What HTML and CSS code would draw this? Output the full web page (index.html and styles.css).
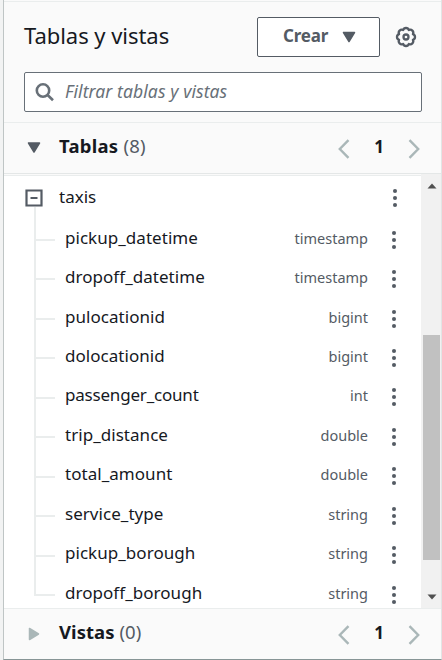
FILE: index.html
```html
<!DOCTYPE html>
<html lang="es">
<head>
<meta charset="utf-8">
<title>Tablas y vistas</title>
<link rel="stylesheet" href="styles.css">
</head>
<body>
<svg width="0" height="0" class="defs">
  <symbol id="dots" viewBox="0 0 6 20"><circle cx="3" cy="3" r="2.05"/><circle cx="3" cy="10" r="2.05"/><circle cx="3" cy="17" r="2.05"/></symbol>
  <symbol id="prev" viewBox="0 0 12 20"><path d="M10.500 1.200 1.800 10l8.700 8.800"/></symbol>
  <symbol id="next" viewBox="0 0 12 20"><path d="M1.500 1.200 10.200 10l-8.700 8.800"/></symbol>
</svg>
<main class="panel">
  <header class="head">
    <div class="title-row">
      <h1>Tablas y vistas</h1>
      <button class="create"><span>Crear</span><svg width="14" height="12" viewBox="0 0 14 12"><path d="M1.500 1.500h11L7 10.500z"/></svg></button>
      <svg class="gear" width="22" height="22" viewBox="0 0 22 22"><path d="M17.930 8.130a3.020 3.020 0 0 1 0 5.740a3.020 3.020 0 0 1-4.060 4.060a3.020 3.020 0 0 1-5.740 0a3.020 3.020 0 0 1-4.060-4.060a3.020 3.020 0 0 1 0-5.740a3.020 3.020 0 0 1 4.060-4.060a3.020 3.020 0 0 1 5.740 0a3.020 3.020 0 0 1 4.060 4.060z"/><circle cx="11" cy="11" r="2.500"/></svg>
    </div>
    <label class="search">
      <svg width="20" height="20" viewBox="0 0 20 20"><circle cx="8" cy="8.500" r="6.200"/><path d="m12.300 12.800 5.700 5.500"/></svg>
      <input type="text" placeholder="Filtrar tablas y vistas">
    </label>
  </header>
  <section class="bar">
    <svg class="caret" width="14" height="12" viewBox="0 0 14 12"><path d="M1.500 1h11L7 10z"/></svg>
    <h2>Tablas <span>(8)</span></h2>
    <nav class="pager"><svg><use href="#prev"/></svg><b>1</b><svg><use href="#next"/></svg></nav>
  </section>
  <div class="body">
    <div class="tree">
      <div class="table-row">
        <svg class="toggle" width="18" height="18" viewBox="0 0 18 18"><path d="M1.500 1.500h15v15h-15zM5.500 9h7"/></svg>
        <span class="table-name">taxis</span>
        <svg class="dots"><use href="#dots"/></svg>
      </div>
      <ul>
        <li><span class="name">pickup_datetime</span><span class="type">timestamp</span><svg class="dots"><use href="#dots"/></svg></li>
        <li><span class="name">dropoff_datetime</span><span class="type">timestamp</span><svg class="dots"><use href="#dots"/></svg></li>
        <li><span class="name">pulocationid</span><span class="type">bigint</span><svg class="dots"><use href="#dots"/></svg></li>
        <li><span class="name">dolocationid</span><span class="type">bigint</span><svg class="dots"><use href="#dots"/></svg></li>
        <li><span class="name tight">passenger_count</span><span class="type">int</span><svg class="dots"><use href="#dots"/></svg></li>
        <li><span class="name">trip_distance</span><span class="type">double</span><svg class="dots"><use href="#dots"/></svg></li>
        <li><span class="name">total_amount</span><span class="type">double</span><svg class="dots"><use href="#dots"/></svg></li>
        <li><span class="name">service_type</span><span class="type">string</span><svg class="dots"><use href="#dots"/></svg></li>
        <li><span class="name">pickup_borough</span><span class="type">string</span><svg class="dots"><use href="#dots"/></svg></li>
        <li><span class="name">dropoff_borough</span><span class="type">string</span><svg class="dots"><use href="#dots"/></svg></li>
      </ul>
    </div>
    <div class="scrollbar">
      <svg width="10" height="6" viewBox="0 0 10 6"><path d="M.5 5.500h9L5 .5z"/></svg>
      <div class="thumb"></div>
      <svg width="10" height="6" viewBox="0 0 10 6"><path d="M.5.5h9L5 5.500z"/></svg>
    </div>
  </div>
  <section class="bar views">
    <svg class="caret" width="14" height="14" viewBox="0 0 14 14"><path d="M2.500 1.500v11l9-5.500z"/></svg>
    <h2>Vistas <span>(0)</span></h2>
    <nav class="pager"><svg><use href="#prev"/></svg><b>1</b><svg><use href="#next"/></svg></nav>
  </section>
</main>
</body>
</html>
```
FILE: styles.css
```css
* { box-sizing: border-box; }
body {
  margin: 0;
  height: 660px;
  overflow: hidden;
  padding-left: 3px;
  background: #f2f3f3;
  font-family: "Noto Sans", "Open Sans", sans-serif;
  color: #16191f;
}
.defs { display: block; height: 0; }
.panel {
  height: 660px;
  display: flex;
  flex-direction: column;
  background: #fafafa;
  border-left: 1px solid #bfc5c5;
  border-right: 1px solid #e2e5e5;
  border-bottom: 1px solid #879596;
}
.head {
  height: 121px;
  margin-top: 1px;
  padding: 15px 19px 0 20px;
  border-top: 1px solid #eaeded;
}
.title-row { display: flex; align-items: center; height: 40px; }
h1 { margin: -5px 0 0; flex: 1; font-size: 22px; font-weight: 400; line-height: 30px; letter-spacing: -.04px; }
.create {
  width: 123px;
  height: 40px;
  padding: 0 23px 0 25px;
  display: flex;
  align-items: center;
  justify-content: space-between;
  border: 1.500px solid #545b64;
  border-radius: 2px;
  background: #fff;
  color: #545b64;
  font: 700 17px "Noto Sans", sans-serif;
  letter-spacing: -.2px;
}
.create span { margin-top: -3px; }
.create svg, .caret { fill: #545b64; stroke: #545b64; stroke-width: 1.500; stroke-linejoin: round; }
.gear { margin: 0 5px 0 15px; fill: none; stroke: #545b64; stroke-width: 2.300; stroke-linejoin: round; }
.search {
  display: flex;
  align-items: center;
  height: 40px;
  margin-top: 15px;
  padding-left: 10px;
  border: 1px solid #687078;
  border-radius: 2px;
  background: #fff;
}
.search svg { fill: none; stroke: #687078; stroke-width: 2.600; flex: none; }
.search input {
  flex: 1;
  min-width: 0;
  margin: -3px 0 0 10px;
  padding: 0;
  border: 0;
  outline: 0;
  background: none;
  font: italic 17.500px "Noto Sans", sans-serif;
  letter-spacing: .1px;
}
.search input::placeholder { color: #687078; opacity: 1; }
.bar {
  display: flex;
  align-items: center;
  height: 51px;
  padding: 0 21px 2px 23px;
  border-top: 1px solid #eaeded;
  flex: none;
}
h2 { flex: 1; margin: -2px 0 0 18px; font-size: 18.500px; font-weight: 700; line-height: 26px; letter-spacing: .25px; }
h2 span { font-weight: 400; color: #545b64; }
.views h2 { letter-spacing: .05px; }
.caret { margin-top: 2px; }
.views .caret { fill: #aab7b8; stroke: #aab7b8; }
.pager { display: flex; align-items: center; gap: 23.500px; }
.pager svg { width: 12px; height: 20px; margin-top: 3px; fill: none; stroke: #aab7b8; stroke-width: 2.400; }
.pager b { width: 11px; font-size: 17px; line-height: 24px; text-align: center; }
.body { flex: 1; min-height: 0; display: flex; border-top: 1px solid #e4e7e7; }
.tree { flex: 1; margin-top: 1px; border-top: 1px solid #eaeded; background: #fff; overflow: hidden; }
.table-row { display: flex; align-items: center; height: 44px; padding: 0 23px 0 21px; }
.toggle { fill: none; stroke: #545b64; stroke-width: 2.200; }
.table-name { flex: 1; margin: -3px 0 0 16px; font-size: 17px; }
.dots { width: 6px; height: 20px; flex: none; fill: #545b64; }
ul { margin: 0; padding: 0 24px 0 30px; list-style: none; }
li {
  position: relative;
  display: flex;
  align-items: center;
  height: 39.450px;
  padding-left: 31px;
}
li::before { content: ""; position: absolute; left: 0; top: 0; width: 2px; height: 100%; background: #eaeded; }
li:first-child::before { top: -13px; height: calc(100% + 13px); }
li:last-child::before { height: 20px; }
li::after { content: ""; position: absolute; left: 0; top: 19px; width: 21px; height: 2px; background: #eaeded; }
.name { flex: 1; margin-top: -5px; font-size: 17px; letter-spacing: .04px; }
.tight { letter-spacing: -.2px; }
.type { margin: -4px 23px 0 0; font-size: 14.500px; color: #545b64; }
.scrollbar {
  width: 20px;
  display: flex;
  flex-direction: column;
  align-items: center;
  padding: 9px 1px 8px 2px;
  background: #f1f1f1;
}
.scrollbar svg { fill: #505050; flex: none; }
.thumb { width: 17px; height: 225px; margin: 146px 0 auto; background: #c1c1c1; flex: none; }
```
